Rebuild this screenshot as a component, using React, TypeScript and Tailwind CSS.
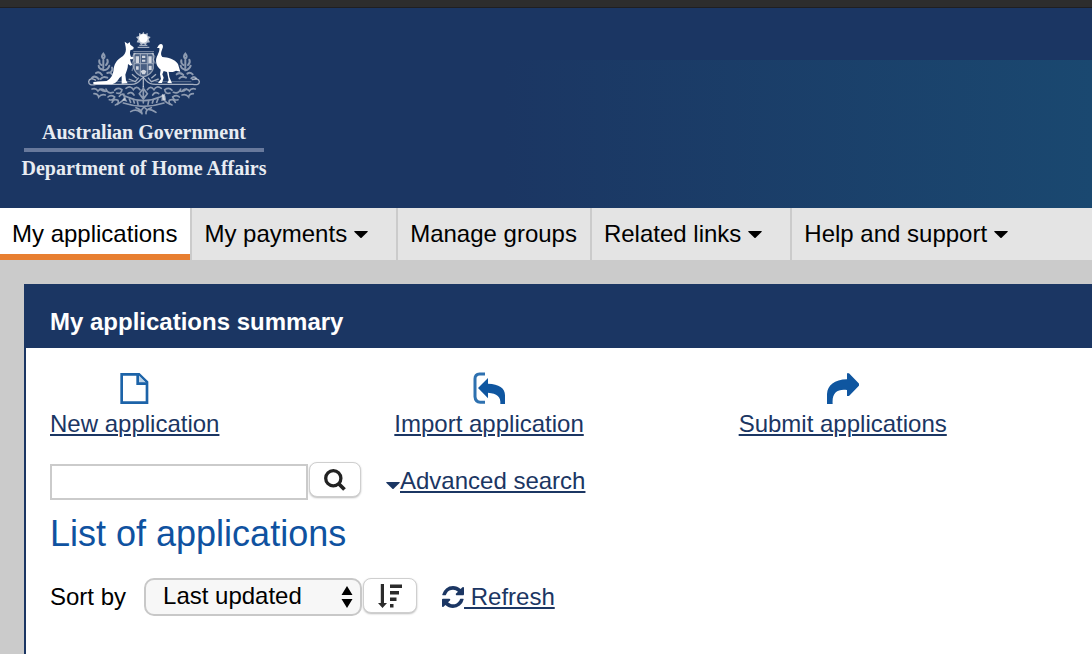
import type { ReactNode } from "react";

const NAV = [
  { label: "My applications", active: true, menu: false },
  { label: "My payments", active: false, menu: true },
  { label: "Manage groups", active: false, menu: false },
  { label: "Related links", active: false, menu: true },
  { label: "Help and support", active: false, menu: true },
];

function Caret({ className = "" }: { className?: string }) {
  return (
    <svg viewBox="0 0 14 7" className={`h-[7px] w-[14px] shrink-0 ${className}`} fill="currentColor" aria-hidden>
      <path d="M0.500 0H13.500Q14 0.400 13.500 1L7.600 6.700Q7 7.200 6.400 6.700L0.500 1Q0 0.400 0.500 0Z" />
    </svg>
  );
}

function CoatOfArms() {
  return (
    <svg viewBox="24 21 336 252" className="h-[84px] w-[112px]" fill="none" stroke="#fff" aria-hidden>
      {/* star and wreath */}
      <circle cx="190" cy="40" r="13" fill="#fff" stroke="none" />
      <path
        d="M190 20l4 8 9-4 0 9 9 3-6 7 4 9-9 1-4 7-7-4-7 4-4-7-9-1 4-9-6-7 9-3 0-9 9 4Z"
        fill="#fff"
        stroke="none"
        opacity="0.7"
      />
      <path d="M173 67H208M178 61H202" strokeWidth="4" opacity="0.6" />

      {/* shield */}
      <path d="M160 84H220V130Q216 150 190 158Q166 150 160 130Z" fill="#fff" stroke="none" opacity="0.2" />
      <g opacity="0.45">
        <path d="M162 86H220V130Q216 148 190 156Q166 148 162 130Z" strokeWidth="4" />
        <path d="M181 86V150M202 86V150M162 116H220M160 80H222" strokeWidth="3" />
      </g>
      <g fill="#fff" stroke="none" opacity="0.75">
        <path d="M167 94h10v20h-10zM186 92h10v7h-10zM205 94h10v20h-10zM186 104h10v6h-10z" />
        <path d="M168 124h8v10h-8zM206 122h9v13h-9zM182 139q9-9 17 0l-4 9h-8z" />
      </g>

      {/* wattle behind the supporters */}
      <g strokeWidth="6" opacity="0.5" strokeLinecap="round">
        <path d="M70 86q-8 9 0 15q8-6 0-15M58 106q-2 9 6 14M82 104q4 9-4 16M70 104V128M56 122q0 10 14 12M88 122q-3 12-18 14M48 144q10-6 18 6M82 144q8-4 14 4M36 158q10-8 20 4M62 162q6-10 20-4M96 128q4 6-4 14" />
        <path d="M316 86q-8 9 0 15q8-6 0-15M304 106q-2 9 6 14M328 104q4 9-4 16M316 104V128M302 122q2 10 14 12M332 122q-4 12-16 14M290 148q10-8 20 2M322 146q8-6 16 2M334 160q8-8 14 0M298 160q8-8 20-2" />
      </g>
      <path d="M166 84l-8 10 4 10-6 10 4 12-4 12M216 84l8 10-4 10 6 12" strokeWidth="4" opacity="0.35" />

      {/* ground scroll */}
      <g opacity="0.6" strokeWidth="4">
        <path d="M48 166Q28 156 26 170Q26 184 48 178H150Q170 180 182 164Q190 154 198 166Q210 180 232 178H338Q358 182 358 170Q356 158 336 164" />
        <path d="M50 170H160M226 170H334" strokeWidth="3" opacity="0.5" />
        <path d="M146 162l20 8 10-12M236 162l-22 8-10-12M190 156v30M156 148l14 12M228 148l-14 12" />
      </g>

      {/* kangaroo */}
      <path
        d="M134 50L143 56L149 51L151 59L161 67L160 73L151 76C149 84 150 90 153 95L160 97L158 103L150 103L153 114L157 119L151 122L144 117C144 131 139 139 136 149L138 166L143 175L125 176L125 153L118 159C112 169 104 178 92 178L40 178L40 171L80 168C93 162 99 150 101 133C103 112 114 103 129 93C137 86 139 76 137 66Z"
        fill="#fff"
        stroke="none"
      />
      {/* emu */}
      <path
        d="M231 69L236 61Q243 54 248 60Q251 66 246 74C242 84 242 90 247 96C264 97 284 102 294 117L301 140L288 137C280 142 272 141 266 140L268 156L276 175L262 174L266 166L261 141L251 138L247 148L251 158L246 174L234 174L243 162L240 148L242 134C231 126 226 112 229 100C233 88 240 78 238 69Z"
        fill="#fff"
        stroke="none"
      />

      {/* lower branches and motto ribbon */}
      <g opacity="0.5" strokeWidth="5" strokeLinecap="round">
        <path d="M36 192q12-4 18 6q8-10 20-2M42 206q12 0 14 10q8-10 20-6M60 192q10 10 22 6M78 192q6 16 22 10M84 216q8-8 20 0q-4 12-16 8M96 232q6-12 18-6q4 10-8 14M104 196q8-10 22-2q-2 14-16 10M118 214q4-8 14-6" />
        <path d="M346 192q-12-4-18 6q-8-10-20-2M340 206q-12 0-14 10q-8-10-20-6M320 192q-10 10-22 6M302 192q-6 16-22 10M298 216q-8-8-20 0q4 12 16 8M286 232q-6-12-18-6q-4 10 8 14M276 196q-8-10-22-2q2 14 16 10" />
        <path d="M138 190q14-10 22 4q10-14 20 0M244 190q-14-10-22 4q-10-14-20 0M190 186V234M178 206l12-16 12 16-12 16zM144 206q10-8 18 4M236 206q-10-8-18 4" />
        <path d="M112 238Q140 222 132 212L142 216Q190 238 240 216L252 210Q244 226 270 238" />
        <path d="M130 234Q190 254 252 234M148 222l4 10M160 224l3 10M172 228l2 10M206 228l-2 10M220 224l-3 10M234 222l-4 10" />
        <path d="M152 260q16-10 30 2q8-24 18-8q10-4 28 8M168 248q18 6 18 18M214 248q-18 6-16 18" />
      </g>
      <path d="M246 206l10 6 2 12-14 4zM126 226l10-8 6 12z" fill="#fff" stroke="none" opacity="0.6" />
    </svg>
  );
}

function NewIcon() {
  return (
    <svg viewBox="296 36 96 96" className="size-8" fill="none" stroke="#1c63a8" strokeWidth="8" aria-hidden>
      <path d="M304 43H356L380 66V128H304Z" />
      <path d="M352 43V71H380" fill="#bcd3e8" />
    </svg>
  );
}

function ImportIcon() {
  return (
    <svg viewBox="282 36 96 96" className="size-8" aria-hidden>
      <path d="M318 42H302Q288 43 288 56V110Q289 126 304 127H318" fill="none" stroke="#2e71b0" strokeWidth="9" />
      <path d="M297 84L327 54V71C360 72 378 84 378 106V132H364C366 110 354 100 327 98V115Z" fill="#0f56a0" />
    </svg>
  );
}

function SubmitIcon() {
  return (
    <svg viewBox="318 36 96 96" className="size-8" fill="#0f56a0" aria-hidden>
      <path d="M318 132V102C320 76 340 59 378 58V40H384L413 70Q416 74 413 78L384 108H378V90C350 86 332 98 335 132Z" />
    </svg>
  );
}

function SearchIcon() {
  return (
    <svg viewBox="0 0 22 22" className="size-[22px]" fill="none" stroke="#222" aria-hidden>
      <circle cx="9.300" cy="9.300" r="7.600" strokeWidth="3.300" />
      <path d="M14.500 14.500L20.500 20.500" strokeWidth="3.800" />
    </svg>
  );
}

function SortIcon() {
  return (
    <svg viewBox="0 0 24 24" className="size-6" fill="#2b2b2b" aria-hidden>
      <path d="M2.800 0H6V19H9L4.500 24L0 19H2.800Z" />
      <path d="M12 0.500H24V4H12ZM12 7H21V10.500H12ZM12 13.500H18.500V17H12ZM12 20H15.500V23.500H12Z" />
    </svg>
  );
}

function RefreshIcon() {
  return (
    <svg viewBox="128 128 1536 1536" className="size-[22px] shrink-0" fill="currentColor" aria-hidden>
      <path d="M1639 1056q0 5-1 7-64 268-268 434.500t-478 166.500q-146 0-282.500-55t-243.500-157l-129 129q-19 19-45 19t-45-19-19-45v-448q0-26 19-45t45-19h448q26 0 45 19t19 45-19 45l-137 137q71 66 161 102t187 36q134 0 250-65t186-179q11-17 53-117 8-23 30-23h192q13 0 22.500 9.500t9.500 22.500zm25-800v448q0 26-19 45t-45 19h-448q-26 0-45-19t-19-45 19-45l138-138q-148-137-349-137-134 0-250 65t-186 179q-11 17-53 117-8 23-30 23h-199q-13 0-22.500-9.500t-9.500-22.500v-7q65-268 270-434.500t480-166.500q146 0 284 55.500t245 156.500l130-129q19-19 45-19t45 19 19 45z" />
    </svg>
  );
}

function ActionLink({ icon, children }: { icon: ReactNode; children: ReactNode }) {
  return (
    <div>
      <a href="#" className="inline-flex flex-col items-center whitespace-nowrap text-[#1b3663]">
        {icon}
        <span className="leading-10 underline decoration-2 underline-offset-2">{children}</span>
      </a>
    </div>
  );
}

export default function App() {
  return (
    <div className="flex min-h-screen flex-col bg-[#cbcbcb] font-['Liberation_Sans',Arial,sans-serif] text-2xl text-black">
      <div className="h-2 border-b border-[#1f1f22] bg-[#2d2d2d]" />

      <header className="h-[200px] bg-[#1b3663] bg-[linear-gradient(90deg,#1b3663_46%,#1a4870_100%)] bg-[position:0_52px] bg-no-repeat px-6 pt-6">
        <div className="flex w-[240px] flex-col items-center whitespace-nowrap font-['Liberation_Serif',serif] text-xl font-bold text-[#e8ecf2]">
          <CoatOfArms />
          <span className="mt-1 leading-6">Australian Government</span>
          <span className="my-1 h-1 w-full bg-[#68799c]" />
          <span className="leading-6">Department of Home Affairs</span>
        </div>
      </header>

      <nav className="flex h-[52px] bg-[#e4e4e4]">
        {NAV.map((item) => {
          const state = item.active
            ? "border-r-2 border-r-[#cbcbcb] bg-white shadow-[inset_0_-6px_0_#e87f31]"
            : "border-r-2 border-r-[#cbcbcb] last:border-r-0";
          return item.menu ? (
            <button key={item.label} className={`flex items-center gap-[7px] whitespace-nowrap pl-3 pr-7 ${state}`}>
              {item.label}
              <Caret />
            </button>
          ) : (
            <a key={item.label} href="#" className={`flex items-center whitespace-nowrap pl-3 pr-[13px] ${state}`}>
              {item.label}
            </a>
          );
        })}
      </nav>

      <main className="flex flex-1 flex-col pl-6 pt-6">
        <section className="flex-1 border-l-2 border-[#1b3663] bg-white">
          <h1 className="bg-[#1b3663] pb-2 pl-6 pt-5 font-bold leading-9 text-white">My applications summary</h1>

          <div className="pl-6 pr-[9px] pt-6">
            <div className="grid grid-cols-3">
              <ActionLink icon={<NewIcon />}>New application</ActionLink>
              <ActionLink icon={<ImportIcon />}>Import application</ActionLink>
              <ActionLink icon={<SubmitIcon />}>Submit applications</ActionLink>
            </div>

            <form className="mt-[18px] flex h-[38px] items-center" onSubmit={(e) => e.preventDefault()}>
              <input
                type="text"
                aria-label="Search applications"
                className="h-9 w-[258px] self-end border-2 border-[#cbcbcb] px-2 outline-none"
              />
              <button
                aria-label="Search"
                className="ml-px flex h-[35px] w-[52px] items-center justify-center self-start rounded-lg border border-[#cfcfcf] bg-white shadow-[0_1px_2px_#bbb]"
              >
                <SearchIcon />
              </button>
              <a href="#" className="ml-[25px] flex items-center leading-10 text-[#1b3663]">
                <Caret className="mt-2" />
                <span className="underline decoration-2 underline-offset-2">Advanced search</span>
              </a>
            </form>

            <h2 className="mt-[14px] text-4xl leading-10 text-[#0f52a0]">List of applications</h2>

            <div className="mt-6 flex h-[38px] items-center">
              <label htmlFor="sort" className="leading-10">
                Sort by
              </label>
              <div className="relative ml-[18px]">
                <select
                  id="sort"
                  className="block h-[38px] w-[218px] appearance-none rounded-[10px] border-2 border-[#c8c8c8] bg-[#f7f7f7] pb-1 pl-[17px] pr-8 leading-8"
                >
                  <option>Last updated</option>
                  <option>Date created</option>
                </select>
                <svg viewBox="0 0 12 22" className="pointer-events-none absolute right-[9px] top-2 h-[22px] w-3" aria-hidden>
                  <path d="M6 0L11.500 9H0.500ZM6 22L11.500 13H0.500Z" />
                </svg>
              </div>
              <button
                aria-label="Sort descending"
                className="ml-px flex h-[35px] w-[54px] items-center justify-center self-start rounded-lg border border-[#cfcfcf] bg-white shadow-[0_1px_2px_#bbb]"
              >
                <SortIcon />
              </button>
              <a href="#" className="ml-[25px] flex items-center leading-10 text-[#1b3663]">
                <RefreshIcon />
                <span className="whitespace-pre underline decoration-2 underline-offset-2">{" Refresh"}</span>
              </a>
            </div>
          </div>
        </section>
      </main>
    </div>
  );
}
